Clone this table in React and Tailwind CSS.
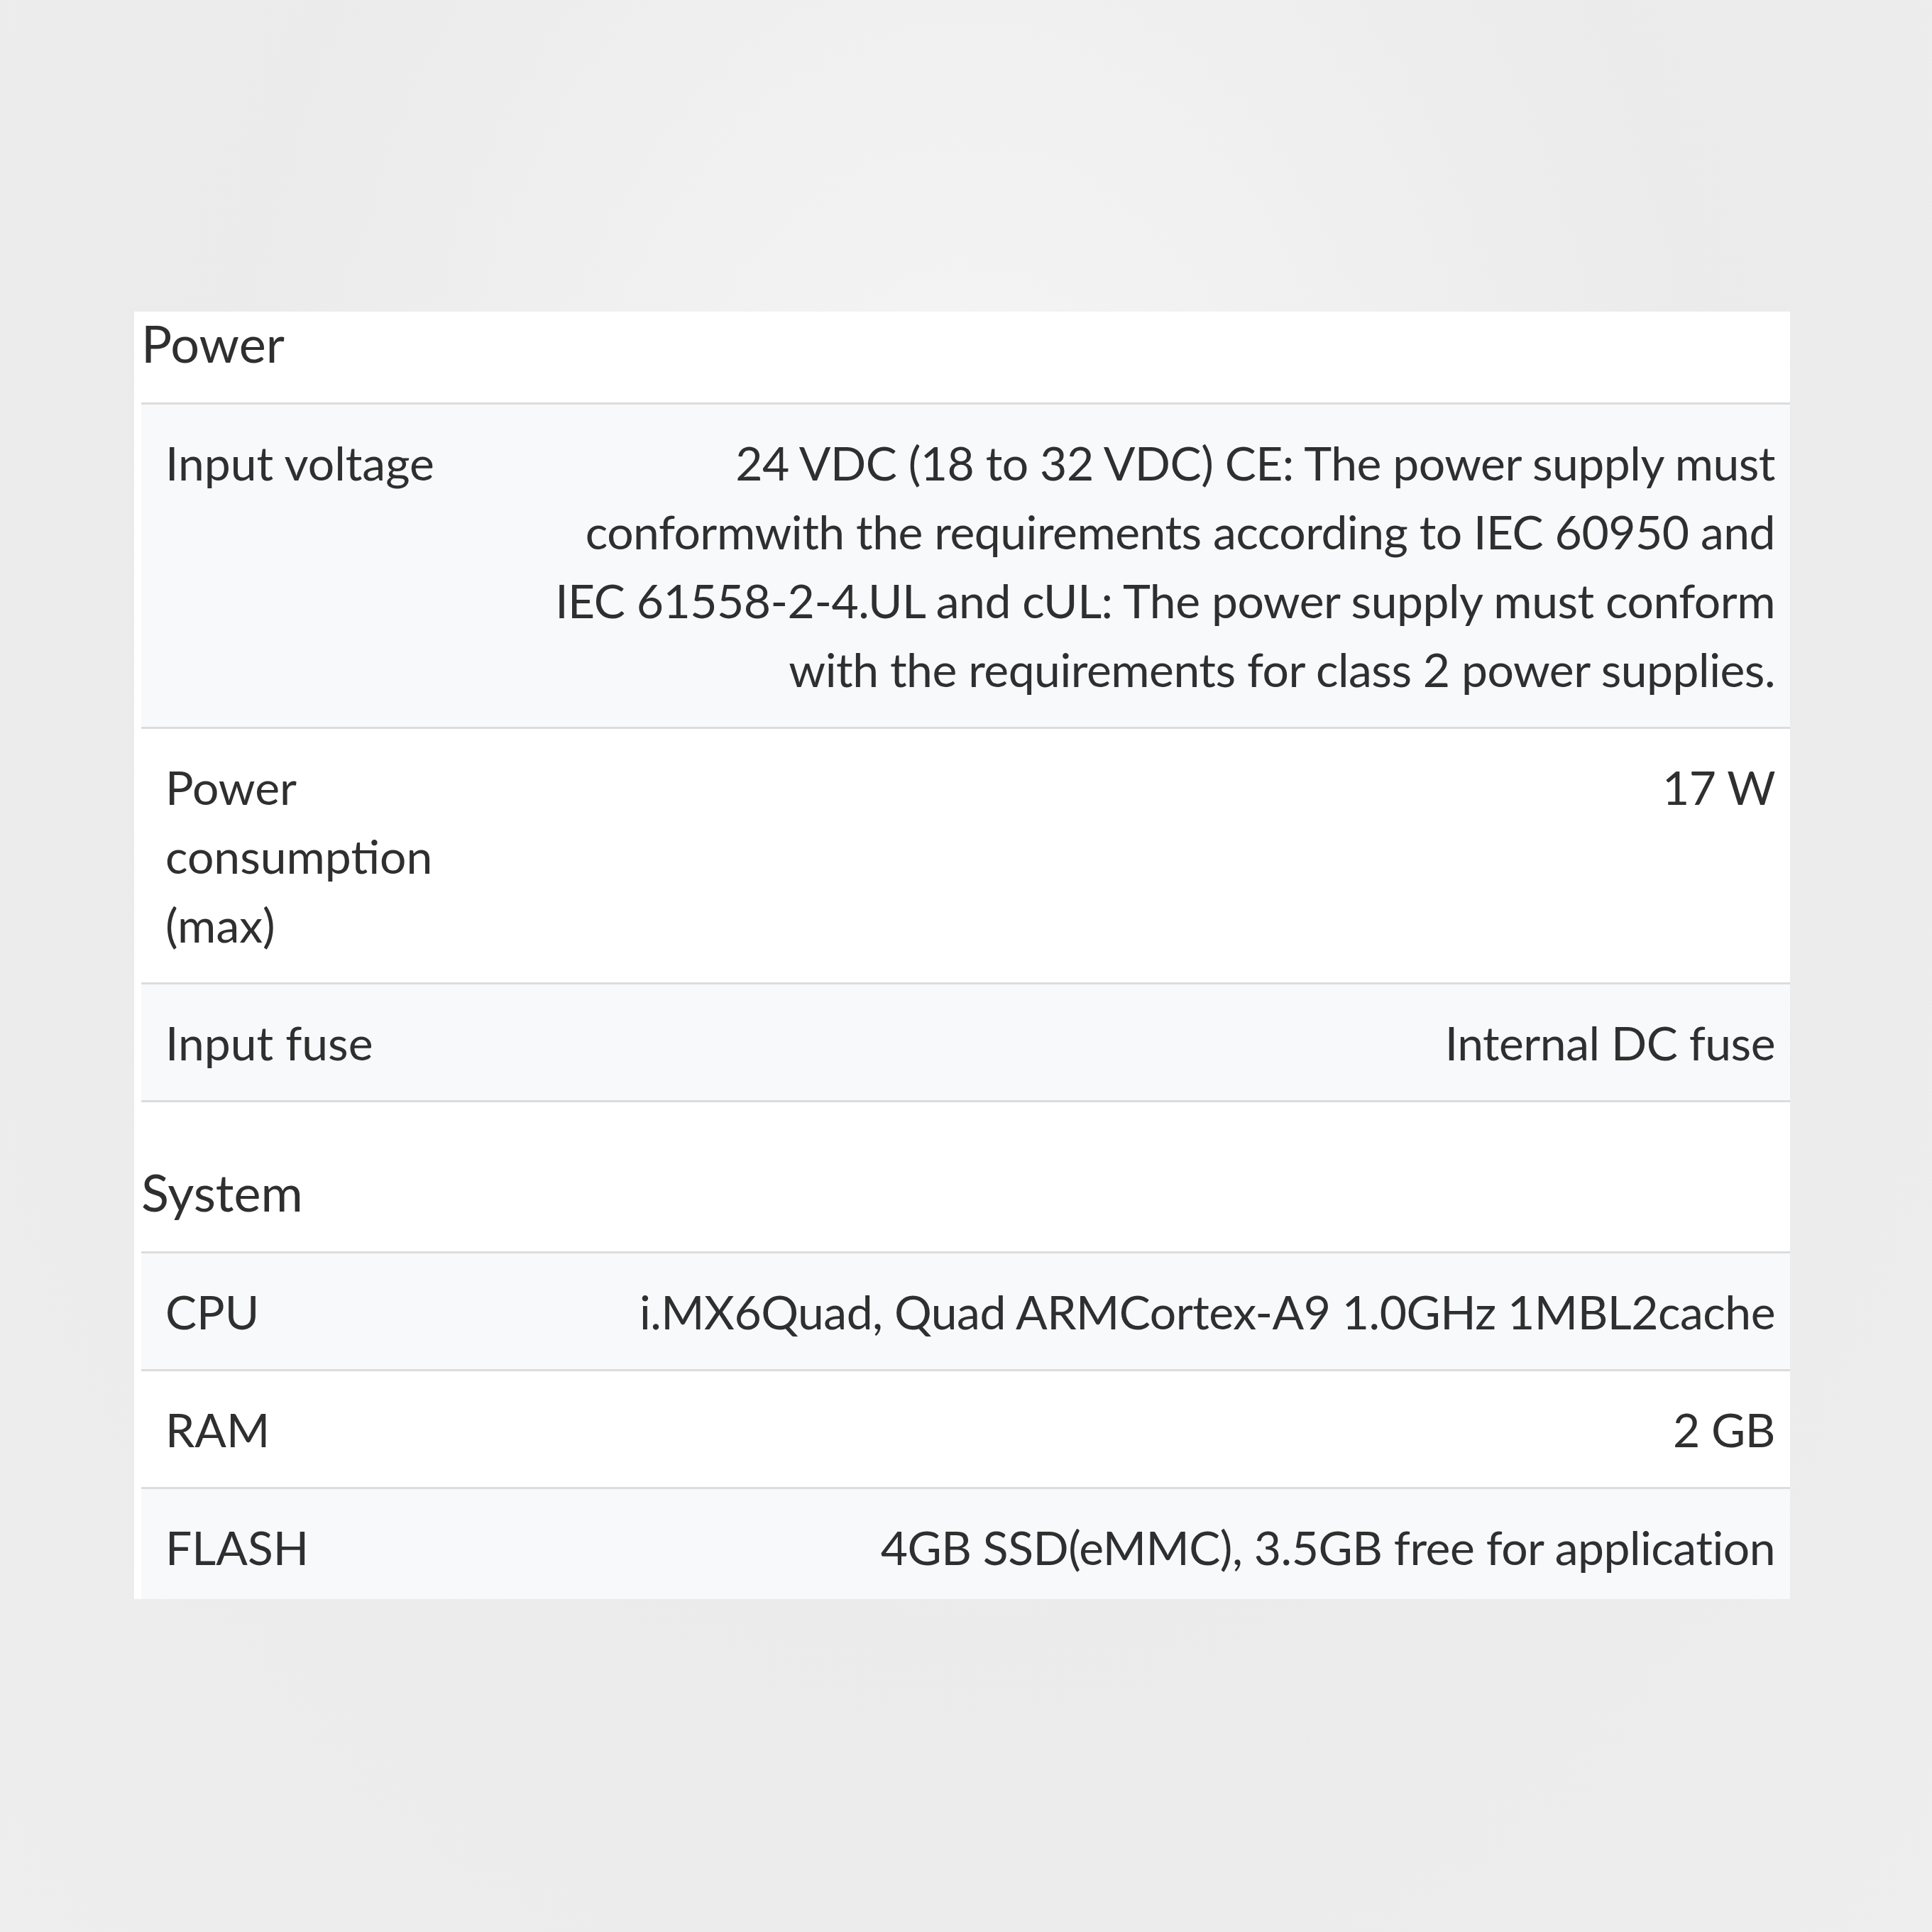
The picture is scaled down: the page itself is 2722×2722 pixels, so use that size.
import React from 'react';

const sections = [
  {
    title: 'Power',
    rows: [
      {
        label: ['Input voltage'],
        value: [
          '24 VDC (18 to 32 VDC) CE: The power supply must',
          'conformwith the requirements according to IEC 60950 and',
          'IEC 61558-2-4.UL and cUL: The power supply must conform',
          'with the requirements for class 2 power supplies.',
        ],
      },
      { label: ['Power', 'consumption', '(max)'], value: ['17 W'] },
      { label: ['Input fuse'], value: ['Internal DC fuse'] },
    ],
  },
  {
    title: 'System',
    rows: [
      { label: ['CPU'], value: ['i.MX6Quad, Quad ARMCortex-A9 1.0GHz 1MBL2cache'] },
      { label: ['RAM'], value: ['2 GB'] },
      { label: ['FLASH'], value: ['4GB SSD(eMMC), 3.5GB free for application'] },
    ],
  },
];

const SpecRow = ({ row, striped }) => (
  <div
    className={`flex justify-between border-t-[3px] border-[#dcdcdc] py-[33px] pl-[34px] pr-[21px] text-[66px] leading-[97px] ${
      striped ? 'bg-[#f8f9fa]' : 'bg-white'
    }`}
  >
    <div className="w-[520px] shrink-0">
      {row.label.map((line) => (
        <div key={line} className="whitespace-nowrap">{line}</div>
      ))}
    </div>
    <div className="text-right tracking-[-0.5px]">
      {row.value.map((line) => (
        <div key={line} className="whitespace-nowrap">{line}</div>
      ))}
    </div>
  </div>
);

export default function App() {
  return (
    <div
      className="w-[2722px] h-[2722px] pt-[439px] pl-[189px] bg-[radial-gradient(ellipse_at_50%_30%,#f6f6f7_0%,#ebebec_55%,#eeeeef_100%)] text-[#2f2f2f]"
      style={{ fontFamily: 'Lato, "Open Sans", sans-serif' }}
    >
      <div className="w-[2333px] h-[1814px] overflow-hidden bg-white pl-[10px]">
        {sections.map((section, si) => (
          <div key={section.title}>
            {/* Section heading */}
            <div
              className={`text-[72px] leading-[89px] pb-[39px] ${si > 0 ? 'pt-[82px] border-t-[3px] border-[#dcdcdc]' : ''}`}
            >
              {section.title}
            </div>
            {section.rows.map((row, ri) => (
              <SpecRow key={row.label.join(' ')} row={row} striped={ri % 2 === 0} />
            ))}
          </div>
        ))}
      </div>
    </div>
  );
}
